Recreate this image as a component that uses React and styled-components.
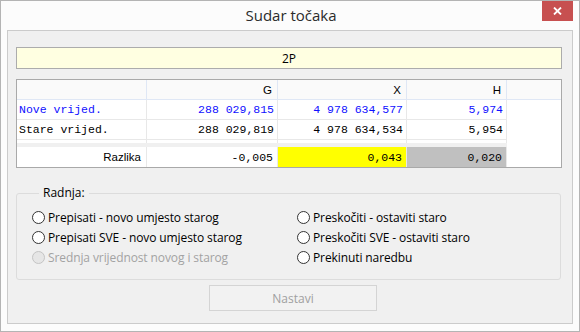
import React from "react";
import styled, { createGlobalStyle } from "styled-components";

const Global = createGlobalStyle`
  html, body { margin: 0; padding: 0; background: #fcfcfc; }
  * { box-sizing: border-box; }
`;

const UI = `"Open Sans", "Noto Sans", sans-serif`;
const MONO = `"Liberation Mono", "Courier New", monospace`;
const SMALL = `"Liberation Sans", Arial, sans-serif`;

const Window = styled.div`
  width: 580px;
  height: 332px;
  border: 1px solid #b4b4b4;
  background: #fcfcfc;
  display: flex;
  flex-direction: column;
  font-family: ${UI};
`;

const TitleBar = styled.div`
  height: 29px;
  display: grid;
  grid-template-columns: 1fr auto 1fr;
  align-items: start;
`;

const Title = styled.div`
  grid-column: 2;
  font-size: 15px;
  line-height: 29px;
  color: #2b2b2b;
  padding-left: 2px;
`;

const CloseBtn = styled.div`
  grid-column: 3;
  justify-self: end;
  margin-right: 6px;
  width: 31px;
  height: 20px;
  background: #c75050;
  display: flex;
  align-items: center;
  justify-content: center;
`;

const Panel = styled.div`
  margin: 0 6px;
  height: 294px;
  border: 1px solid #cbcbcb;
  background: #f0f0f0;
  padding: 16px 10px 0 8px;
  display: flex;
  flex-direction: column;
`;

const CodeBox = styled.div`
  height: 22px;
  border: 1px solid #acacac;
  background: #ffffe1;
  display: flex;
  align-items: center;
  justify-content: center;
  font-size: 12px;
  color: #000;
`;

const Table = styled.div`
  margin-top: 10px;
  border: 1px solid #a9a9a9;
  background: #fff;
  display: grid;
  grid-template-columns: 130px 131px 129px 100px 54px;
  grid-template-rows: 20px 20px 20px 3px 4px 20px;
`;

const HeadCell = styled.div`
  background: #fafafa;
  border-bottom: 1px solid #dfe7f5;
  border-right: ${(p) => (p.$last ? "none" : "1px solid #dfe7f5")};
  font-family: ${SMALL};
  font-size: 11.5px;
  color: #000;
  display: flex;
  align-items: center;
  justify-content: flex-end;
  padding-right: 5px;
`;

const Cell = styled.div`
  border-right: 1px solid #e8e8e8;
  border-bottom: ${(p) => (p.$noBottom ? "none" : "1px solid #e8e8e8")};
  background: ${(p) => p.$bg || "#fff"};
  font-family: ${(p) => (p.$sans ? SMALL : MONO)};
  font-size: 11.5px;
  color: ${(p) => p.$color || "#000"};
  display: flex;
  align-items: center;
  justify-content: ${(p) => (p.$left ? "flex-start" : "flex-end")};
  padding: ${(p) => (p.$left ? "0 0 0 2px" : `0 ${p.$pr || 3}px 0 0`)};
  white-space: pre;
  overflow: hidden;
`;

const BlankCol = styled.div`
  grid-column: 5;
  grid-row: 2 / 7;
  background: #fff;
`;

const Band = styled.div`
  grid-column: 1 / 5;
  background: #f0f0f0;
`;

const Group = styled.fieldset`
  margin: 17px 1px 0 0;
  padding: 6px 0 12px 15px;
  border: 1px solid #dcdcdc;
  border-radius: 3px;
  min-width: 0;
`;

const Legend = styled.legend`
  margin-left: 7px;
  padding: 0 4px;
  font-size: 12px;
  line-height: 16px;
  color: #000;
`;

const Options = styled.div`
  display: grid;
  grid-template-columns: 265px 1fr;
  grid-template-rows: repeat(3, 20px);
  grid-auto-flow: column;
`;

const Option = styled.label`
  display: flex;
  align-items: center;
  gap: 3px;
  font-size: 12px;
  letter-spacing: -0.1px;
  color: ${(p) => (p.$disabled ? "#a3a3a3" : "#000")};
  white-space: nowrap;
`;

const Radio = styled.span`
  width: 13px;
  height: 13px;
  border-radius: 50%;
  border: 1px solid ${(p) => (p.$disabled ? "#c4c4c4" : "#333")};
  background: ${(p) => (p.$disabled ? "#e6e6e6" : "#fff")};
  flex: none;
`;

const Button = styled.div`
  margin-top: 5px;
  margin-left: 193px;
  width: 168px;
  height: 26px;
  border: 1px solid #d4d4d4;
  background: #f2f2f2;
  color: #a0a0a0;
  font-size: 12px;
  display: flex;
  align-items: center;
  justify-content: center;
`;

const options = [
  { label: "Prepisati - novo umjesto starog" },
  { label: "Prepisati SVE - novo umjesto starog" },
  { label: "Srednja vrijednost novog i starog", disabled: true },
  { label: "Preskočiti - ostaviti staro" },
  { label: "Preskočiti SVE - ostaviti staro" },
  { label: "Prekinuti naredbu" },
];

const rows = [
  { label: "Nove vrijed.", color: "#1010ff", values: ["288 029,815", "4 978 634,577", "5,974"] },
  { label: "Stare vrijed.", color: "#000", values: ["288 029,819", "4 978 634,534", "5,954"] },
];

export default function App() {
  return (
    <>
      <Global />
      <Window>
        <TitleBar>
          <Title>Sudar točaka</Title>
          <CloseBtn>
            <svg width="9" height="8" viewBox="0 0 9 8">
              <path d="M1 0.5 L8 7.5 M8 0.5 L1 7.5" stroke="#fff" strokeWidth="1.8" />
            </svg>
          </CloseBtn>
        </TitleBar>
        <Panel>
          <CodeBox>2P</CodeBox>
          <Table>
            <HeadCell />
            <HeadCell>G</HeadCell>
            <HeadCell>X</HeadCell>
            <HeadCell>H</HeadCell>
            <HeadCell $last />
            {rows.map((r) => (
              <React.Fragment key={r.label}>
                <Cell $left $color={r.color}>{r.label}</Cell>
                {r.values.map((v) => (
                  <Cell key={v} $color={r.color}>{v}</Cell>
                ))}
              </React.Fragment>
            ))}
            <BlankCol />
            <Cell $noBottom />
            <Cell $noBottom />
            <Cell $noBottom />
            <Cell $noBottom />
            <Band />
            <Cell $noBottom $sans $pr={5}>Razlika</Cell>
            <Cell $noBottom $pr={4}>-0,005</Cell>
            <Cell $noBottom $pr={4} $bg="#ffff00">0,043</Cell>
            <Cell $noBottom $pr={4} $bg="#c0c0c0">0,020</Cell>
          </Table>
          <Group>
            <Legend>Radnja:</Legend>
            <Options>
              {options.map((o) => (
                <Option key={o.label} $disabled={o.disabled}>
                  <Radio $disabled={o.disabled} />
                  {o.label}
                </Option>
              ))}
            </Options>
          </Group>
          <Button>Nastavi</Button>
        </Panel>
      </Window>
    </>
  );
}
